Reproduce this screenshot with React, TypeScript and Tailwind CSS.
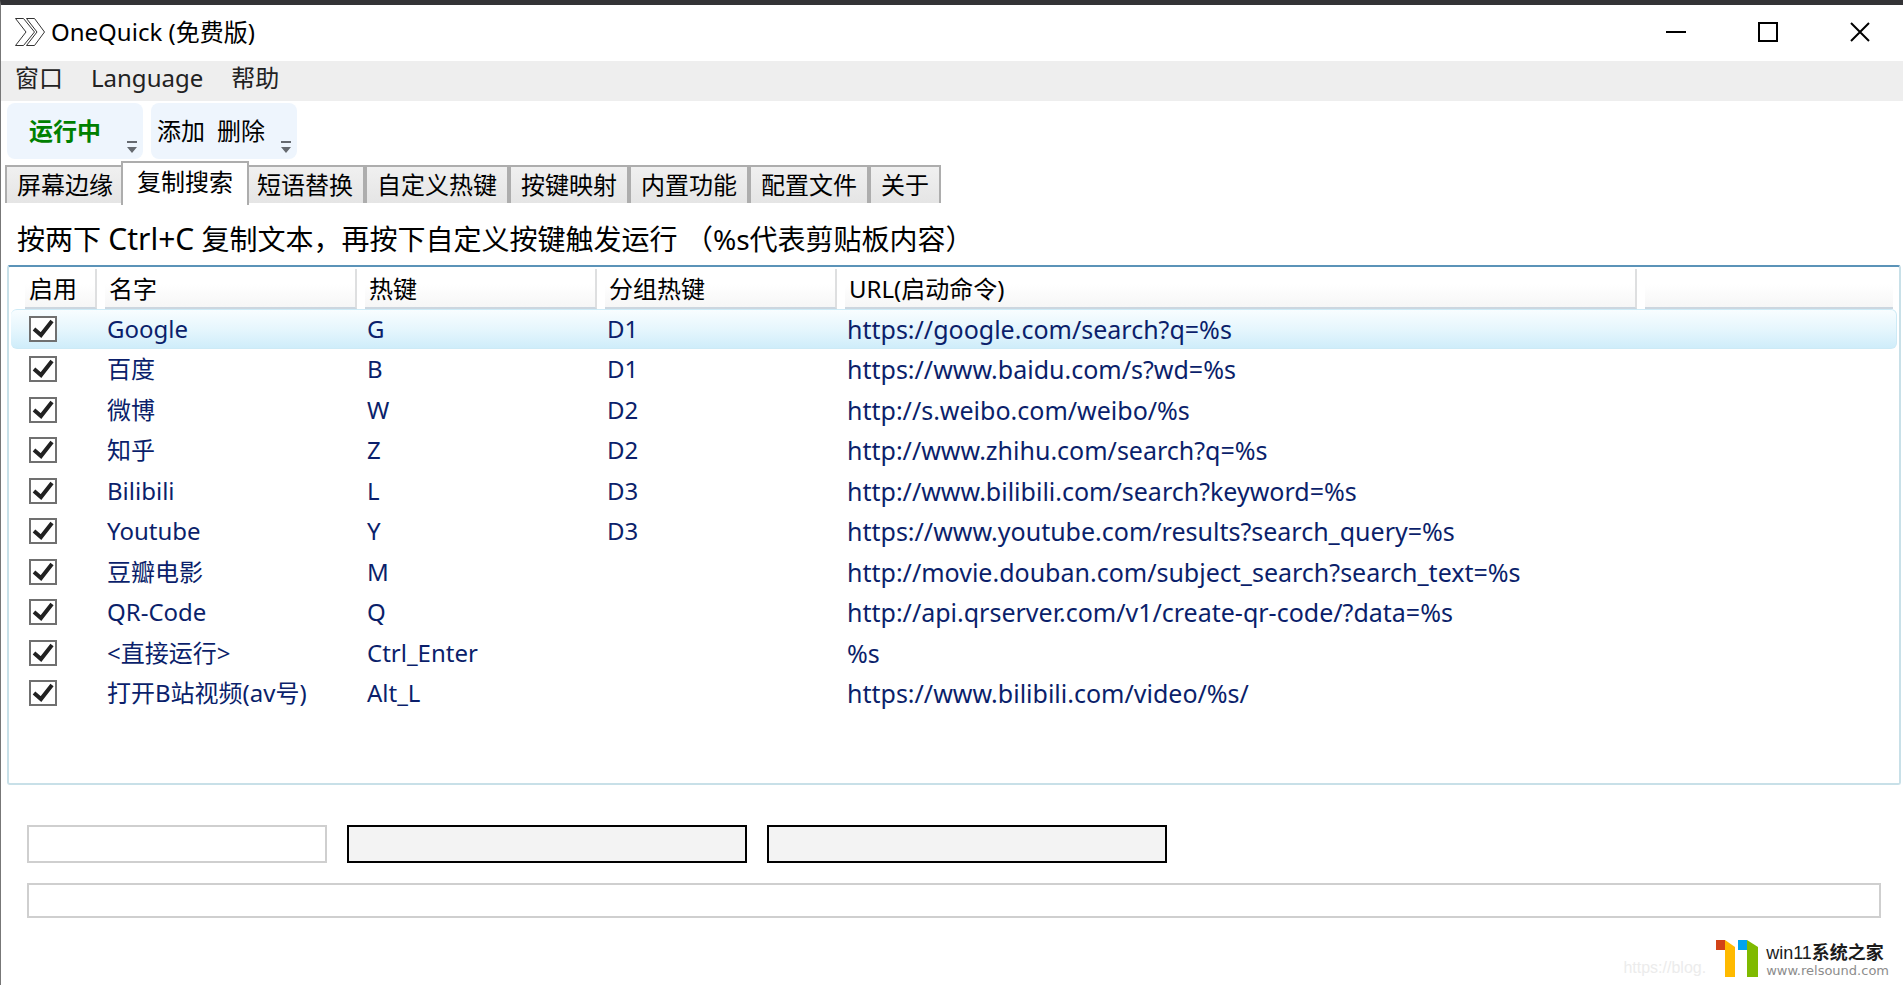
import { useState } from "react";

type Entry = { name: string; key: string; group: string; url: string };

const entries: Entry[] = [
  { name: "Google", key: "G", group: "D1", url: "https://google.com/search?q=%s" },
  { name: "百度", key: "B", group: "D1", url: "https://www.baidu.com/s?wd=%s" },
  { name: "微博", key: "W", group: "D2", url: "http://s.weibo.com/weibo/%s" },
  { name: "知乎", key: "Z", group: "D2", url: "http://www.zhihu.com/search?q=%s" },
  { name: "Bilibili", key: "L", group: "D3", url: "http://www.bilibili.com/search?keyword=%s" },
  { name: "Youtube", key: "Y", group: "D3", url: "https://www.youtube.com/results?search_query=%s" },
  { name: "豆瓣电影", key: "M", group: "", url: "http://movie.douban.com/subject_search?search_text=%s" },
  { name: "QR-Code", key: "Q", group: "", url: "http://api.qrserver.com/v1/create-qr-code/?data=%s" },
  { name: "<直接运行>", key: "Ctrl_Enter", group: "", url: "%s" },
  { name: "打开B站视频(av号)", key: "Alt_L", group: "", url: "https://www.bilibili.com/video/%s/" },
];

const tabs = ["屏幕边缘", "复制搜索", "短语替换", "自定义热键", "按键映射", "内置功能", "配置文件", "关于"];
const columns = ["启用", "名字", "热键", "分组热键", "URL(启动命令)", ""];

function AppIcon() {
  return (
    <svg width="30" height="28" viewBox="0 0 30 28" fill="none" stroke="#333" strokeWidth="1" aria-hidden="true">
      <path d="M.5.5H8.500L19.500 14 8.500 27.500H.5L11 14Z" />
      <path d="M11.500.5H19.500L29.500 14 19.500 27.500H11.500L22 14Z" />
    </svg>
  );
}

function Overflow({ label }: { label: string }) {
  return (
    <button aria-label={label} className="mb-[6px] self-end">
      <svg width="10" height="12" viewBox="0 0 10 12" fill="#666a70" aria-hidden="true">
        <path d="M0 0H10V2H0ZM0 6H10L5 12Z" />
      </svg>
    </button>
  );
}

function TitleBar() {
  return (
    <header className="flex h-14 items-center bg-white pr-[3px] pb-[2px] pl-[14px]">
      <AppIcon />
      <h1 className="ml-[6px] flex-1 text-2xl text-black">OneQuick (免费版)</h1>
      <div className="flex gap-3">
        <button aria-label="Minimize" className="grid h-12 w-20 place-items-center">
          <svg width="20" height="20" viewBox="0 0 20 20" stroke="#000" strokeWidth="2" aria-hidden="true">
            <path d="M0 10H20" />
          </svg>
        </button>
        <button aria-label="Maximize" className="grid h-12 w-20 place-items-center">
          <svg width="20" height="20" viewBox="0 0 20 20" fill="none" stroke="#000" strokeWidth="2" aria-hidden="true">
            <path d="M1 1H19V19H1Z" />
          </svg>
        </button>
        <button aria-label="Close" className="grid h-12 w-20 place-items-center">
          <svg width="20" height="20" viewBox="0 0 20 20" stroke="#000" strokeWidth="2" aria-hidden="true">
            <path d="M1 1L19 19M19 1L1 19" />
          </svg>
        </button>
      </div>
    </header>
  );
}

function Watermark() {
  return (
    <footer className="mt-[22px] flex items-start justify-end pr-[14px] pb-[6px]">
      <span className="mt-[18px] mr-[10px] font-['Liberation_Sans',sans-serif] text-base leading-5 text-[#ececec]">
        https://blog.
      </span>
      <svg width="42" height="37" viewBox="0 0 42 37" className="mr-2" aria-hidden="true">
        <path d="M0 0H9V10H0Z" fill="#d24317" />
        <path d="M9 0L19 7V37H9Z" fill="#ffba00" />
        <path d="M22 0H31V10H22Z" fill="#00a3ee" />
        <path d="M31 0L42 7V37H31Z" fill="#7fba00" />
      </svg>
      <div className="mt-[3px] font-['Liberation_Sans','Noto_Sans_CJK_SC',sans-serif]">
        <div className="text-lg leading-5 text-[#1c1c1c]">
          win11<span className="font-bold">系统之家</span>
        </div>
        <div className="font-['DejaVu_Sans',sans-serif] text-[13px] leading-4 text-[#8c8c8c]">www.relsound.com</div>
      </div>
    </footer>
  );
}

export default function App() {
  const [active, setActive] = useState(1);
  const [selected, setSelected] = useState(0);

  return (
    <div className="flex min-h-screen flex-col border-t-[5px] border-l border-t-[#333336] border-l-[#777] bg-white font-['Noto_Sans','Noto_Sans_CJK_SC',sans-serif] text-2xl text-black">
      <TitleBar />
      <nav className="flex h-10 items-center gap-7 bg-[#eee] pb-[6px] pl-[14px] text-[#222]">
        <button>窗口</button>
        <button>Language</button>
        <button>帮助</button>
      </nav>

      <div className="flex gap-2 pt-[2px] pl-[6px]">
        <div className="flex h-14 w-[136px] items-center justify-between rounded-lg bg-[#eef5fd] pr-[6px] pl-[22px]">
          <button className="font-bold text-[#008000]">运行中</button>
          <Overflow label="运行选项" />
        </div>
        <div className="flex h-14 w-[146px] items-center justify-between rounded-lg bg-[#eef5fd] pr-[6px] pl-[6px]">
          <div className="flex gap-3">
            <button>添加</button>
            <button>删除</button>
          </div>
          <Overflow label="编辑选项" />
        </div>
      </div>

      <div role="tablist" className="mt-[2px] flex h-11 items-start pl-1 leading-9">
        {tabs.map((tab, i) => (
          <button
            key={tab}
            role="tab"
            aria-selected={i === active}
            onClick={() => setActive(i)}
            className={
              i === active
                ? "z-10 -mx-1 h-11 border-x-2 border-t-2 border-[#adadad] bg-white px-[14px] pb-1"
                : "mt-1 h-[38px] border-x-2 border-t-2 border-[#adadad] bg-linear-to-b from-[#f0f0f0] to-[#e5e5e5] px-[10px]"
            }
          >
            {tab}
          </button>
        ))}
      </div>

      <main className="flex flex-1 flex-col">
        <p className="pt-[14px] pb-[6px] pl-4 text-[28px] leading-10">
          按两下 <kbd className="font-['Noto_Sans',sans-serif] text-[30px] leading-8">Ctrl+C</kbd>{" "}
          复制文本，再按下自定义按键触发运行 （%s代表剪贴板内容）
        </p>

        <div className="mr-[2px] ml-[6px] flex-1 rounded-[3px] border-2 border-[#c8e0e8] border-t-[#5b93b8] px-[2px]">
          <table className="w-full table-fixed border-separate border-spacing-0 text-left">
            <colgroup>
              <col className="w-[86px]" />
              <col className="w-[260px]" />
              <col className="w-[240px]" />
              <col className="w-[240px]" />
              <col className="w-[800px]" />
              <col />
            </colgroup>
            <thead>
              <tr>
                {columns.map((column, i) => (
                  <th key={i} className="h-[42px] p-0 pt-[2px] align-top font-normal">
                    <div
                      className={
                        i === 0
                          ? "ml-[14px] h-10 border-r-2 border-b-2 border-r-[#dedfe0] border-b-[#ccd6df] bg-linear-to-b from-white from-40% to-[#f6f6f6] pl-1 leading-10"
                          : i === columns.length - 1
                            ? "mr-1 ml-2 h-10 border-b-2 border-b-[#ccd6df] bg-linear-to-b from-white from-40% to-[#f6f6f6]"
                            : "ml-2 h-10 border-r-2 border-b-2 border-r-[#dedfe0] border-b-[#ccd6df] bg-linear-to-b from-white from-40% to-[#f6f6f6] pl-1 leading-10"
                      }
                    >
                      {column}
                    </div>
                  </th>
                ))}
              </tr>
            </thead>
            <tbody className="text-[#0b1f6b]">
              {entries.map((entry, i) => (
                <tr
                  key={entry.name}
                  onClick={() => setSelected(i)}
                  className={
                    i === selected
                      ? "h-10 leading-9 *:border-y *:border-[#cdeaf6] *:bg-linear-to-b *:from-[#f8fdff] *:via-[#e6f6fd] *:to-[#cfedfa] *:first:rounded-l-md *:last:rounded-r-md *:last:border-r"
                      : "h-10 leading-9 odd:h-[41px]"
                  }
                >
                  <td className="p-0 pl-[18px]">
                    <label className="relative block h-[26px] w-7">
                      <input
                        type="checkbox"
                        defaultChecked
                        aria-label={entry.name}
                        className="peer block h-[26px] w-7 appearance-none border-2 border-[#707070] bg-white"
                      />
                      <svg
                        viewBox="0 0 28 26"
                        className="pointer-events-none absolute inset-0 hidden h-[26px] w-7 peer-checked:block"
                        fill="none"
                        stroke="#212121"
                        strokeWidth="4"
                        aria-hidden="true"
                      >
                        <path d="M5 13L12 19L23 5" />
                      </svg>
                    </label>
                  </td>
                  <td className="p-0 pl-[10px]">{entry.name}</td>
                  <td className="p-0 pl-[10px]">{entry.key}</td>
                  <td className="p-0 pl-[10px]">{entry.group}</td>
                  <td className="p-0 pl-[10px] text-[25px] leading-9">{entry.url}</td>
                  <td className="p-0" />
                </tr>
              ))}
            </tbody>
          </table>
        </div>

        <form className="mt-10 mr-[22px] ml-[26px] flex flex-col gap-5">
          <div className="flex gap-5">
            <input aria-label="名字" className="h-[38px] w-[300px] border-2 border-[#cfcfcf] bg-white px-2" />
            <input aria-label="热键" className="h-[38px] w-[400px] border-2 border-black bg-[#f3f3f3] px-2" />
            <input aria-label="分组热键" className="h-[38px] w-[400px] border-2 border-black bg-[#f3f3f3] px-2" />
          </div>
          <input aria-label="URL(启动命令)" className="h-[35px] w-full border-2 border-[#cfcfcf] bg-white px-2" />
        </form>
      </main>
      <Watermark />
    </div>
  );
}
